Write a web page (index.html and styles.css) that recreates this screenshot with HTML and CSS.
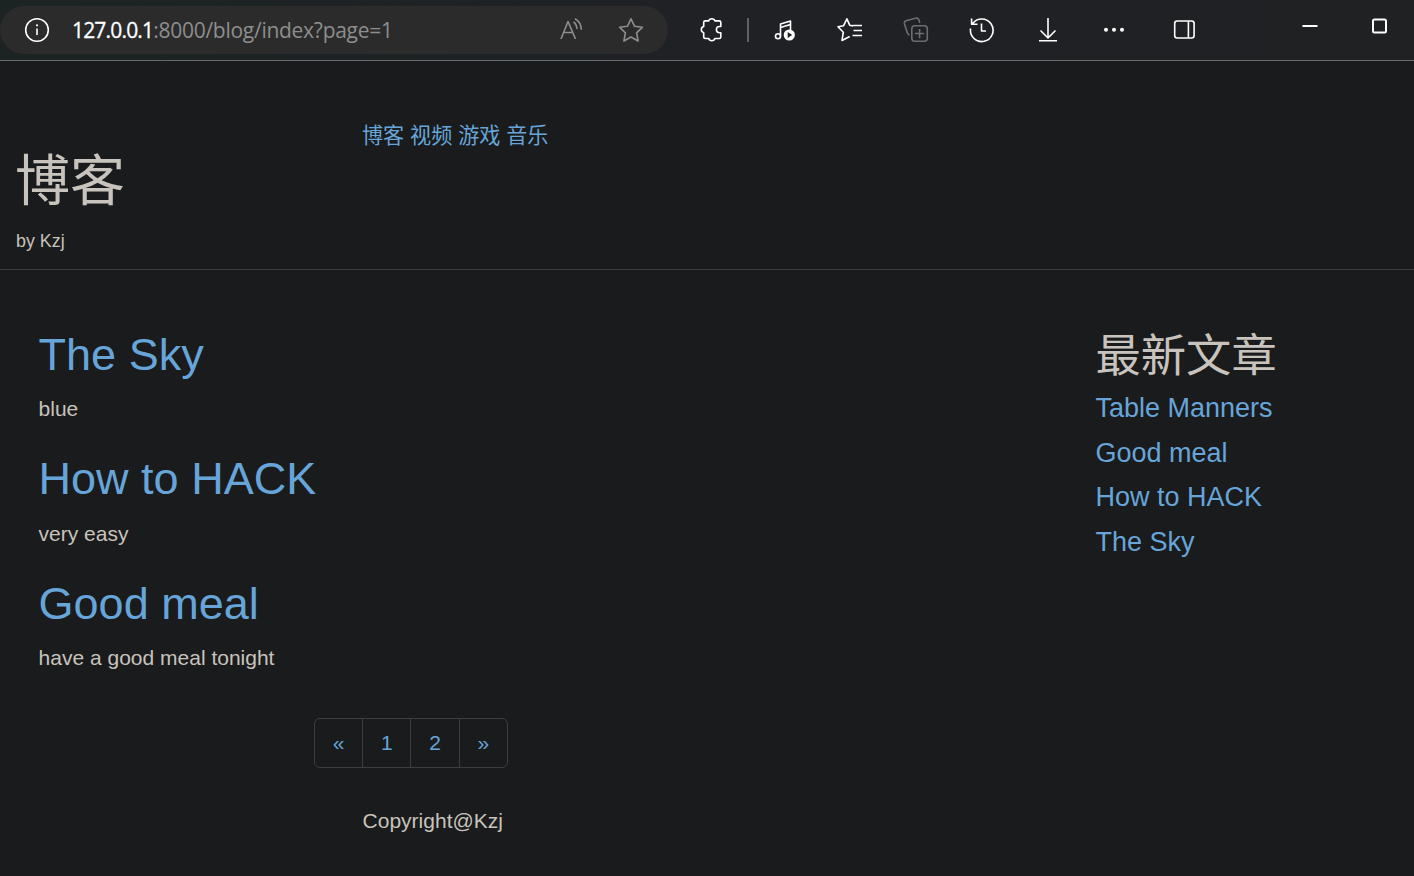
FILE: index.html
```html
<!DOCTYPE html>
<html lang="zh">
<head>
<meta charset="utf-8">
<title>博客</title>
<link rel="stylesheet" href="styles.css">
</head>
<body>
<div class="toolbar">
  <div class="address">
    <svg class="info" width="26" height="26" viewBox="0 0 26 26"><circle cx="13" cy="13" r="11.3"/><path d="M13 11.5v6.5"/><circle class="fill" cx="13" cy="8.3" r="1.1"/></svg>
    <div class="url"><span class="host">127.0.0.1</span><span class="path">:8000/blog/index?page=1</span></div>
    <svg class="read dim" width="26" height="26" viewBox="0 0 26 26"><path d="M3 22 10 4.500 17.500 22M5.600 15.500h9.200M15.500 5c2 1.200 3.200 3.300 3.500 7M17 1.800c3.800 2 6 5.400 6.400 11"/></svg>
    <svg class="fav dim" width="26" height="26" viewBox="0 0 26 26"><path d="m13 1.800 3.500 7.400 8 1-5.900 5.600 1.500 8.200-7.100-4-7.100 4 1.500-8.200-5.900-5.600 8-1z"/></svg>
  </div>
  <div class="tools">
    <svg width="26" height="26" viewBox="0 0 26 26"><path d="M7.200 3.900H10.700a3.200 2.900 0 0 1 6.200 0H21.300q1.500 0 1.500 1.500v4.100h-1.300a3.100 3.100 0 0 0 0 6.200h1.300V20q0 1.500-1.500 1.500h-4.400a3.200 2.900 0 0 1-6.200 0H7.200q-1.500 0-1.500-1.500v-4.300a3.200 3.200 0 0 1 0-6.200V5.400q0-1.500 1.500-1.500z"/></svg>
    <span class="divider"></span>
    <svg class="music" width="26" height="26" viewBox="0 0 26 26"><circle cx="5" cy="19.300" r="2.500"/><path d="M7.500 19.300V7L17.500 4v9M7.500 10.500l10-3"/><circle class="fill" cx="16.300" cy="18" r="5.600"/><path class="play" d="M14.700 15.100v5.800l4.500-2.900z"/></svg>
    <svg class="list" width="26" height="26" viewBox="0 0 26 26"><path d="m16 9-3.200-.7-2.900-6.500-3.400 7-5.500 1 5.300 5.500-1.300 8.200 7.700-4M15.500 8.500H25M16.500 13.500H25M15.500 18.500H25"/></svg>
    <svg class="off" width="26" height="26" viewBox="0 0 26 26"><path d="M6.500 18Q4.800 17.500 4.200 15.500L1.500 7Q.8 4.600 3 3.800L12.500 1.300q2.500-.6 3.500 1.700l.7 3"/><rect x="8.800" y="8.700" width="15.500" height="15.500" rx="3"/><path d="M16.600 12v9.200M12 16.500h9.200"/></svg>
    <svg class="hist" width="26" height="26" viewBox="0 0 26 26"><path d="M3.500 6.800A11.300 11.300 0 1 1 1.600 11.500M2.600 1.500v5.700H8.500M12.500 6.500V14H17"/></svg>
    <svg class="down" width="26" height="26" viewBox="0 0 26 26"><path d="M13 1v20M5.500 13.500 13 21l7.500-7.500M4 23.700h18"/></svg>
    <svg class="more" width="26" height="26" viewBox="0 0 26 26"><circle class="fill" cx="5" cy="12.700" r="2"/><circle class="fill" cx="13" cy="12.700" r="2"/><circle class="fill" cx="21" cy="12.700" r="2"/></svg>
    <svg class="side" width="26" height="26" viewBox="0 0 26 26"><rect x="3.700" y="4" width="19.400" height="17" rx="2.500"/><path d="M17.400 4v17"/></svg>
    <svg class="min" width="18" height="18" viewBox="0 0 18 18"><path d="M1.500 9h15"/></svg>
    <svg class="max" width="18" height="18" viewBox="0 0 18 18"><rect x="3" y="2.500" width="13" height="13" rx="1.500"/></svg>
  </div>
</div>
<header class="site-head">
  <div class="brand"><h1>博客</h1><small>by Kzj</small></div>
  <nav><a>博客</a> <a>视频</a> <a>游戏</a> <a>音乐</a></nav>
</header>
<main>
  <section class="posts">
    <article><h2><a>The Sky</a></h2><p>blue</p></article>
    <article><h2><a>How to HACK</a></h2><p>very easy</p></article>
    <article><h2><a>Good meal</a></h2><p>have a good meal tonight</p></article>
    <ul class="pagination"><li>«</li><li>1</li><li>2</li><li>»</li></ul>
  </section>
  <aside>
    <h2>最新文章</h2>
    <h4><a>Table Manners</a></h4>
    <h4><a>Good meal</a></h4>
    <h4><a>How to HACK</a></h4>
    <h4><a>The Sky</a></h4>
  </aside>
</main>
<footer>Copyright@Kzj</footer>
</body>
</html>
```
FILE: styles.css
```css
* { box-sizing: border-box; }
body {
  margin: 0;
  height: 876px;
  overflow: hidden;
  background: #1a1b1c;
  color: #c8c3bc;
  font: 21px/30px "Liberation Sans", "Noto Sans CJK SC", sans-serif;
}
h1, h2, h4, p, ul { margin: 0; padding: 0; font-weight: 400; }
a { color: #67a5d9; }

.toolbar {
  display: flex;
  height: 61px;
  border-bottom: 1px solid #68696a;
  background: linear-gradient(90deg, #1b2423, #1f2125 50%, #202123);
}
.address {
  display: flex;
  align-items: center;
  width: 668px;
  height: 48px;
  margin-top: 6px;
  padding-left: 24px;
  border-radius: 24px;
  background: #2b2b2b;
}
svg { flex: none; fill: none; stroke: #fff; stroke-width: 1.6; stroke-linejoin: round; }
.fill { fill: #fff; stroke: none; }
.dim { stroke: #8e8e8e; }
.off { stroke: #6c6d6f; }
.url { width: 488px; margin-left: 22px; font: 21px/30px "Open Sans", sans-serif; white-space: nowrap; }
.host { color: #fff; letter-spacing: -0.82px; -webkit-text-stroke: 0.3px #fff; }
.path { color: #8e8e8e; letter-spacing: -0.27px; }
.read { margin-left: -2px; }
.fav { margin-left: 34px; }
.tools { display: flex; padding: 17px 0 0 30px; }
.divider { width: 2px; height: 24px; margin: 1px 24px 0 23px; background: #606163; }
.list { margin-left: 38px; }
.off, .hist, .down, .more { margin-left: 40px; }
.side { margin-left: 44px; }
.play { fill: #202124; stroke: none; }
.min { margin: 0 0 0 104px; stroke-width: 2; }
.max { margin: 0 0 0 51px; stroke-width: 2; }

.site-head { display: flex; height: 209px; border-bottom: 1px solid #3a3e40; }
.brand { width: 362px; padding: 90px 0 0 15px; }
.brand h1 { height: 60px; font-size: 55px; line-height: 60px; }
.brand small { display: block; margin: 15px 0 0 1px; font-size: 17.85px; line-height: 30px; }
nav { padding-top: 60px; font-size: 21.1px; }

main { display: flex; height: 536px; }
.posts { width: 1057px; padding: 59.6px 0 0 38.6px; }
article { height: 124.5px; }
h2 { height: 49.5px; font-size: 45px; line-height: 49.5px; }
article p { margin-top: 15px; }
.pagination { display: flex; width: 194px; height: 50px; margin: 15px 0 0 275.4px; border: 1px solid #3a3e40; border-radius: 6px; list-style: none; }
.pagination li { flex: 1; color: #67a5d9; text-align: center; line-height: 48px; }
.pagination li + li { border-left: 1px solid #3a3e40; }
aside { padding: 61.6px 0 0 38.5px; }
h4 { height: 29.7px; margin-bottom: 15px; font-size: 27px; line-height: 29.7px; }
aside h2 { margin-bottom: 13px; font-size: 45.3px; }
footer { padding-left: 362.6px; }
```
